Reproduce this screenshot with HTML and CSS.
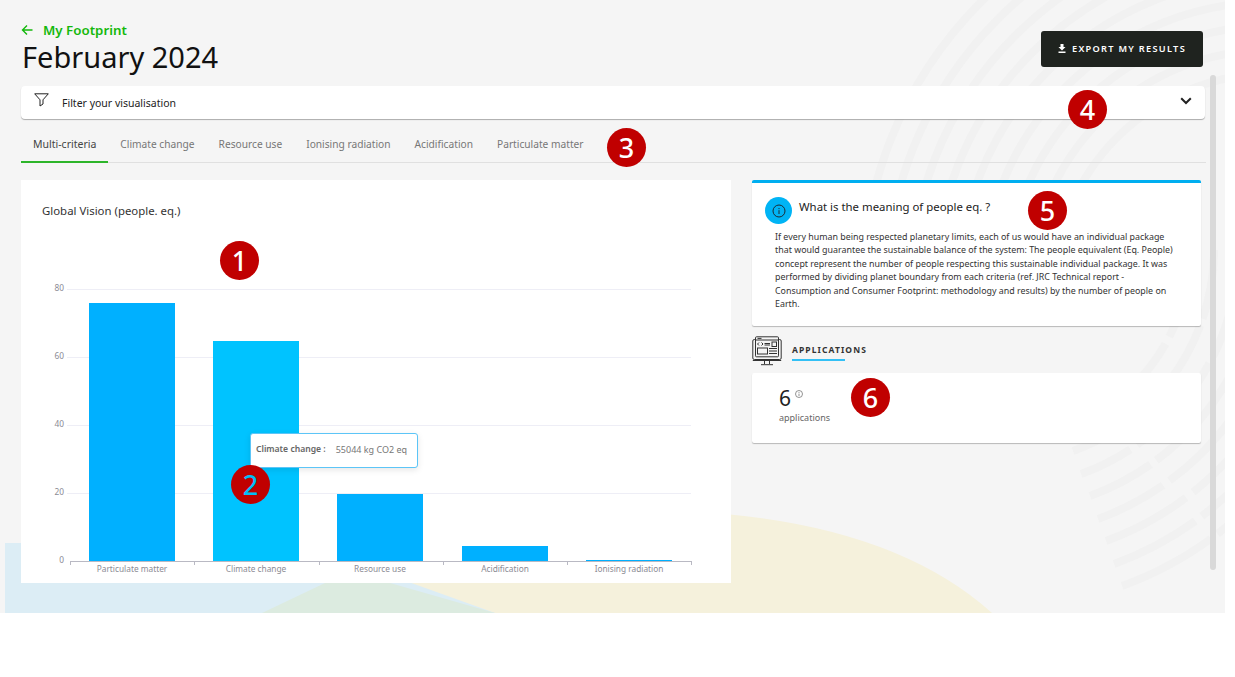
FILE: index.html
```html
<!DOCTYPE html>
<html lang="en">

<head>
    <meta charset="UTF-8">
    <meta name="viewport" content="width=device-width, initial-scale=1.0">
    <title>My Footprint - February 2024</title>
    <link rel="stylesheet" href="styles.css">
</head>

<body>
    <div class="screen">
        <!-- decorative background -->
        <svg class="backdrop" width="1225" height="613" viewBox="0 0 1225 613">
            <path d="M262 613 Q420 510 725 514 Q900 530 992 613 Z" fill="#f5f1dc" />
            <polygon points="5,543 300,543 495,613 5,613" fill="#dcedf5" />
            <polygon points="262,613 325,583 390,583 495,613" fill="#dcebe0" />
            <g fill="none" stroke="#f1f1f1" stroke-width="8">
                <path d="M1054 290A216 216 0 0 1 1270 74" />
                <path d="M1030 290A240 240 0 0 1 1270 50" />
                <path d="M1006 290A264 264 0 0 1 1270 26" />
                <path d="M982 290A288 288 0 0 1 1270 2" />
                <path d="M958 290A312 312 0 0 1 1270 -22" />
                <path d="M934 290A336 336 0 0 1 1270 -46" />
                <path d="M910 290A360 360 0 0 1 1270 -70" />
                <path d="M886 290A384 384 0 0 1 1270 -94" />
                <path d="M862 290A408 408 0 0 1 1270 -118" />
                <path d="M1190 250A190 190 0 0 1 1065 429" stroke-dasharray="90 8" />
                <path d="M1214 250A214 214 0 0 1 1073 451" stroke-dasharray="70 7 130 9" />
                <path d="M1238 250A238 238 0 0 1 1081 474" stroke-dasharray="110 8" />
                <path d="M1262 250A262 262 0 0 1 1090 496" stroke-dasharray="85 9 150 7" />
                <path d="M1286 250A286 286 0 0 1 1098 519" stroke-dasharray="130 8" />
                <path d="M1310 250A310 310 0 0 1 1106 541" stroke-dasharray="100 8 170 9" />
                <path d="M1334 250A334 334 0 0 1 1114 564" stroke-dasharray="150 8" />
                <path d="M1358 250A358 358 0 0 1 1122 586" stroke-dasharray="160 8" />
            </g>
        </svg>

        <div class="scrollbar"></div>

        <main class="content">
            <header class="page-header">
                <div>
                    <a class="back-link" href="#">
                        <svg width="12" height="12" viewBox="0 0 12 12" fill="none" stroke="currentColor"
                            stroke-width="1.4">
                            <path d="M11.5 6H1.5M6 1.5L1.5 6L6 10.5" />
                        </svg>
                        My Footprint
                    </a>
                    <h1 class="page-title">February 2024</h1>
                </div>
                <button class="export-button">
                    <svg width="8" height="9" viewBox="0 0 8 9" fill="#fff">
                        <path d="M2.5 0H5.5V3H7.5L4 6.4L0.5 3H2.5ZM0.5 7.6H7.5V9H0.5Z" />
                    </svg>
                    EXPORT MY RESULTS
                </button>
            </header>

            <div class="filter-bar">
                <svg class="filter-icon" width="15" height="14" viewBox="0 0 15 14" fill="none" stroke="#222"
                    stroke-width="1">
                    <path d="M0.7 0.8H14.3L9 6.8V11L6 13V6.8Z" />
                </svg>
                <span class="filter-label">Filter your visualisation</span>
                <svg class="chevron" width="12" height="8" viewBox="0 0 12 8" fill="none" stroke="#222"
                    stroke-width="2">
                    <path d="M1.2 1.2L6 6L10.8 1.2" />
                </svg>
            </div>

            <nav class="tabs">
                <a class="tab active" href="#">Multi-criteria</a>
                <a class="tab" href="#">Climate change</a>
                <a class="tab" href="#">Resource use</a>
                <a class="tab" href="#">Ionising radiation</a>
                <a class="tab" href="#">Acidification</a>
                <a class="tab" href="#">Particulate matter</a>
            </nav>

            <div class="columns">
                <section class="chart-card">
                    <h2 class="chart-title">Global Vision (people. eq.)</h2>
                    <svg class="chart" width="710" height="319" viewBox="0 0 710 319">
                        <g stroke="#eeeef6" stroke-width="1">
                            <line x1="46" y1="25.5" x2="670" y2="25.5" />
                            <line x1="46" y1="93.5" x2="670" y2="93.5" />
                            <line x1="46" y1="161.5" x2="670" y2="161.5" />
                            <line x1="46" y1="229.5" x2="670" y2="229.5" />
                        </g>
                        <g fill="#00b0ff">
                            <rect x="68" y="39" width="86" height="258" />
                            <rect x="192" y="77" width="86" height="220" fill="#00c3ff" />
                            <rect x="316" y="230" width="86" height="67" />
                            <rect x="441" y="282" width="86" height="15" />
                            <rect x="565" y="296" width="86" height="1" />
                        </g>
                        <g stroke="#b9b9c3" stroke-width="1">
                            <line x1="49" y1="297.5" x2="670" y2="297.5" />
                            <line x1="49.5" y1="297" x2="49.5" y2="301" />
                            <line x1="173.5" y1="297" x2="173.5" y2="301" />
                            <line x1="298.5" y1="297" x2="298.5" y2="301" />
                            <line x1="422.5" y1="297" x2="422.5" y2="301" />
                            <line x1="546.5" y1="297" x2="546.5" y2="301" />
                            <line x1="670.5" y1="297" x2="670.5" y2="301" />
                        </g>
                        <g class="axis-y" text-anchor="end">
                            <text x="43" y="27">80</text>
                            <text x="43" y="95">60</text>
                            <text x="43" y="163">40</text>
                            <text x="43" y="231">20</text>
                            <text x="43" y="299">0</text>
                        </g>
                        <g class="axis-x" text-anchor="middle">
                            <text x="111" y="308">Particulate matter</text>
                            <text x="235" y="308">Climate change</text>
                            <text x="359" y="308">Resource use</text>
                            <text x="484" y="308">Acidification</text>
                            <text x="608" y="308">Ionising radiation</text>
                        </g>
                    </svg>
                    <div class="tooltip"><b>Climate change :</b><span>55044 kg CO2 eq</span></div>
                </section>

                <aside class="side">
                    <section class="info-card">
                        <div class="info-head">
                            <span class="info-badge">
                                <svg width="14" height="14" viewBox="0 0 14 14" fill="none" stroke="#1d2a33"
                                    stroke-width="1">
                                    <circle cx="7" cy="7" r="6" />
                                    <path d="M7 6.2V10M7 4V5.1" />
                                </svg>
                            </span>
                            <h2 class="info-title">What is the meaning of people eq. ?</h2>
                        </div>
                        <p class="info-text">If every human being respected planetary limits, each of us would have an
                            individual package that would guarantee the sustainable balance of the system: The people
                            equivalent (Eq. People) concept represent the number of people respecting this sustainable
                            individual package. It was performed by dividing planet boundary from each criteria (ref.
                            JRC Technical report - Consumption and Consumer Footprint: methodology and results) by the
                            number of people on Earth.</p>
                    </section>

                    <div class="section-head">
                        <svg class="section-icon" width="30" height="30" viewBox="0 0 30 30" fill="none" stroke="#333"
                            stroke-width="1">
                            <rect x="0.8" y="3.5" width="28.4" height="20" rx="1.5" />
                            <rect x="3.5" y="0.8" width="23" height="20" rx="1" fill="#f5f5f5" />
                            <path d="M3.5 4H26.5M5.5 2.4H9.5" />
                            <path d="M7 6.5L5.5 8L7 9.5M9.5 6.5L11 8L9.5 9.5M12.5 7.5H18M12.5 9H18" />
                            <rect x="20" y="6" width="4.5" height="4.5" />
                            <rect x="5.5" y="12" width="10" height="6" />
                            <path d="M17 12.5H25M17 15H25M17 17.5H25" />
                            <path d="M0.8 24.5H29.2M12.5 24.5V28M17.5 24.5V28M9 28.7H21" />
                        </svg>
                        <h3 class="section-title">APPLICATIONS</h3>
                    </div>

                    <section class="stat-card">
                        <div class="stat-value">
                            6
                            <svg class="stat-info" width="8" height="8" viewBox="0 0 8 8" fill="none" stroke="#666"
                                stroke-width="0.7">
                                <circle cx="4" cy="4" r="3.5" />
                                <path d="M4 3.6V6M4 2V2.9" />
                            </svg>
                        </div>
                        <div class="stat-label">applications</div>
                    </section>
                </aside>
            </div>
        </main>

        <!-- numbered callouts -->
        <span class="callout callout-1">1</span>
        <span class="callout callout-2">2</span>
        <span class="callout callout-3">3</span>
        <span class="callout callout-4">4</span>
        <span class="callout callout-5">5</span>
        <span class="callout callout-6">6</span>
    </div>
</body>

</html>
```

FILE: styles.css
```css
* {
    margin: 0;
    padding: 0;
    box-sizing: border-box;
}

html,
body {
    background-color: #ffffff;
    overflow: hidden;
}

body {
    font-family: 'Noto Sans', 'Open Sans', sans-serif;
    color: #222222;
    height: 677px;
}

.screen {
    position: relative;
    width: 1225px;
    height: 613px;
    background-color: #f5f5f5;
    overflow: hidden;
}

.backdrop {
    position: absolute;
    top: 0;
    left: 0;
}

.scrollbar {
    position: absolute;
    left: 1210px;
    top: 75px;
    width: 6px;
    height: 495px;
    background-color: #d9d9d9;
    border-radius: 3px;
}

.content {
    position: relative;
    padding: 21px 20px 0 21px;
}

.page-header {
    display: flex;
    justify-content: space-between;
    align-items: flex-start;
    height: 65px;
    padding-right: 2px;
}

.back-link {
    display: flex;
    align-items: center;
    gap: 10px;
    color: #14b80c;
    font-size: 13.3px;
    font-weight: 600;
    line-height: 18px;
    text-decoration: none;
}

.page-title {
    font-size: 29px;
    font-weight: 400;
    line-height: 36px;
    color: #111111;
    padding-left: 1px;
}

.export-button {
    display: flex;
    align-items: center;
    justify-content: center;
    gap: 6px;
    width: 162px;
    height: 36px;
    margin-top: 10px;
    padding-bottom: 2px;
    background-color: #1f231f;
    color: #ffffff;
    border: none;
    border-radius: 3px;
    font-family: inherit;
    font-size: 9.2px;
    font-weight: 600;
    letter-spacing: 1.3px;
}

.filter-bar {
    display: flex;
    align-items: center;
    height: 33px;
    padding: 0 13px 0 13px;
    background-color: #ffffff;
    border-radius: 4px;
    box-shadow: 0 1px 1px rgba(0, 0, 0, 0.3);
}

.filter-icon {
    margin-top: -6px;
}

.filter-label {
    margin-left: 13px;
    font-size: 10.5px;
    padding-top: 1px;
    flex: 1;
}

.chevron {
    margin-top: -3px;
}

.tabs {
    display: flex;
    height: 44px;
    margin-right: -1px;
    padding-top: 12px;
    border-bottom: 1px solid #e0e0e0;
}

.tab {
    display: block;
    height: 32px;
    padding: 6px 12px 0;
    color: #777777;
    font-size: 10.2px;
    text-decoration: none;
}

.tab.active {
    color: #444444;
    font-size: 10.5px;
    border-bottom: 2px solid #2db52a;
}

.columns {
    display: flex;
    gap: 21px;
    margin-top: 17px;
}

.chart-card {
    position: relative;
    width: 710px;
    height: 403px;
    background-color: #ffffff;
}

.chart-title {
    padding: 24px 0 0 21px;
    font-size: 11.4px;
    font-weight: 400;
    line-height: 14px;
    color: #333333;
}

.chart {
    display: block;
    margin-top: 46px;
}

.axis-y text,
.axis-x text {
    font-size: 8.3px;
    fill: #8b8b94;
}

.tooltip {
    position: absolute;
    left: 229px;
    top: 253px;
    display: flex;
    align-items: center;
    gap: 10px;
    width: 168px;
    height: 35px;
    padding: 0 0 3px 5px;
    background-color: #ffffff;
    border: 1px solid #5cc5f7;
    border-radius: 3px;
    box-shadow: 0 2px 6px rgba(0, 0, 0, 0.1);
    font-size: 9px;
    color: #777777;
}

.tooltip b {
    color: #666666;
    font-size: 8.6px;
    font-weight: 600;
}

.side {
    width: 449px;
}

.info-card {
    height: 146px;
    padding: 14px 13px 0 13px;
    background-color: #ffffff;
    border-top: 3px solid #00aef0;
    border-radius: 2px;
    box-shadow: 0 1px 1px rgba(0, 0, 0, 0.25);
}

.info-head {
    display: flex;
    align-items: flex-start;
    gap: 7px;
}

.info-badge {
    display: flex;
    align-items: center;
    justify-content: center;
    width: 27px;
    height: 27px;
    background-color: #00b4f5;
    border-radius: 50%;
}

.info-title {
    padding-top: 1px;
    font-size: 11.4px;
    font-weight: 400;
    line-height: 18px;
    color: #222222;
}

.info-text {
    width: 404px;
    margin: 6px 0 0 10px;
    font-size: 8.9px;
    line-height: 13.4px;
    color: #333333;
}

.section-head {
    display: flex;
    align-items: center;
    gap: 10px;
    height: 47px;
}

.section-icon {
    margin-top: 3px;
}

.section-title {
    position: relative;
    padding: 4px 0 5px;
    margin-top: 1px;
    font-size: 8.5px;
    line-height: 12px;
    font-weight: 700;
    letter-spacing: 1.1px;
    color: #333333;
}

.section-title::after {
    content: "";
    position: absolute;
    left: 0;
    bottom: 0;
    width: 53px;
    height: 2px;
    background-color: #33c0f5;
}

.stat-card {
    height: 70px;
    padding: 12px 0 0 27px;
    background-color: #ffffff;
    border-radius: 2px;
    box-shadow: 0 1px 1px rgba(0, 0, 0, 0.25);
}

.stat-value {
    display: flex;
    align-items: flex-start;
    gap: 4px;
    font-size: 21px;
    line-height: 26px;
    color: #222222;
}

.stat-info {
    margin-top: 5px;
}

.stat-label {
    font-size: 9px;
    line-height: 13px;
    color: #666666;
}

.callout {
    position: absolute;
    display: flex;
    align-items: center;
    justify-content: center;
    width: 39px;
    height: 39px;
    background-color: #c00000;
    border-radius: 50%;
    color: #ffffff;
    font-size: 27px;
    font-weight: 500;
    font-family: 'Noto Sans', sans-serif;
}

.callout-1 {
    left: 220px;
    top: 241px;
}

.callout-2 {
    left: 231px;
    top: 465px;
    color: #00bdf7;
}

.callout-3 {
    left: 607px;
    top: 128px;
}

.callout-4 {
    left: 1068px;
    top: 90px;
}

.callout-5 {
    left: 1028px;
    top: 191px;
}

.callout-6 {
    left: 851px;
    top: 378px;
}
```
